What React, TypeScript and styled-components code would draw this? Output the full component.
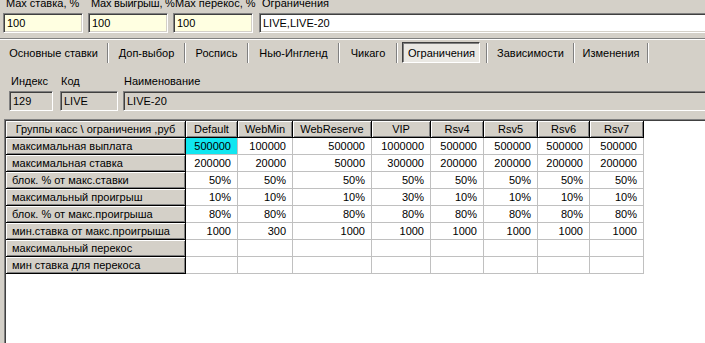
import React from 'react'
import styled, { createGlobalStyle, css } from 'styled-components'

const GlobalStyle = createGlobalStyle`
  html, body {
    margin: 0;
    padding: 0;
    overflow: hidden;
    background: #d4d0c8;
  }
`

const Window = styled.div`
  width: 705px;
  height: 343px;
  overflow: hidden;
  display: flex;
  flex-direction: column;
  background: #d4d0c8;
  color: #000;
  font-family: 'Liberation Sans', Arial, sans-serif;
  font-size: 11px;
`

const FieldRow = styled.div<{ $top: number; $left: number }>`
  display: flex;
  margin-top: ${p => p.$top}px;
  padding-left: ${p => p.$left}px;
`

const FieldGroup = styled.div<{ $w?: number; $ml?: number }>`
  display: flex;
  flex-direction: column;
  gap: 3px;
  margin-left: ${p => p.$ml ?? 0}px;
  ${p =>
    p.$w
      ? css`
          width: ${p.$w}px;
          flex: none;
        `
      : css`
          flex: 1;
          margin-right: -20px;
        `}
`

const Label = styled.div<{ $indent: number; $tight?: boolean }>`
  height: 13px;
  line-height: 13px;
  padding-left: ${p => p.$indent}px;
  white-space: nowrap;
  overflow: visible;
  letter-spacing: ${p => (p.$tight ? '-0.2px' : 'normal')};
`

const Edit = styled.div<{ $bg: string }>`
  box-sizing: border-box;
  height: 20px;
  padding: 0 3px;
  line-height: 18px;
  white-space: nowrap;
  overflow: hidden;
  background: ${p => p.$bg};
  border: 1px solid;
  border-color: #808080 #fff #fff #808080;
  box-shadow: inset 1px 1px 0 #404040, inset -1px -1px 0 #d4d0c8;
`

const ToolBar = styled.div`
  display: flex;
  align-items: flex-start;
  margin-top: 5px;
  padding-top: 3px;
  height: 21px;
  border-top: 1px solid #808080;
  box-shadow: inset 0 1px 0 #fff;
`

const Tab = styled.div<{ $w: number; $active?: boolean }>`
  box-sizing: border-box;
  width: ${p => p.$w}px;
  height: 21px;
  display: flex;
  align-items: center;
  justify-content: center;
  white-space: nowrap;
  ${p =>
    p.$active &&
    css`
      margin: 0 6px 0 4px;
      padding: 1px 0 0 1px;
      background: #eae8e3;
      border: 1px solid;
      border-color: #404040 #fff #fff #404040;
      box-shadow: inset 1px 1px 0 #808080;
    `}
`

const Separator = styled.div`
  box-sizing: border-box;
  width: 2px;
  height: 20px;
  margin-top: 1px;
  border-left: 1px solid #808080;
  border-right: 1px solid #fff;
`

const GridFrame = styled.div`
  flex: 1;
  margin: 8px -20px -20px 4px;
  padding: 1px 0 0 1px;
  background: #fff;
  border-top: 1px solid #808080;
  border-left: 1px solid #808080;
  box-shadow: inset 1px 1px 0 #404040;
`

const Grid = styled.div<{ $cols: number[] }>`
  display: grid;
  grid-template-columns: ${p => p.$cols.map(c => `${c}px`).join(' ')};
  grid-auto-rows: 17px;
`

const FixedCell = styled.div<{ $align: 'left' | 'center' }>`
  box-sizing: border-box;
  padding-left: ${p => (p.$align === 'left' ? 6 : 0)}px;
  text-align: ${p => p.$align};
  line-height: 16px;
  white-space: nowrap;
  overflow: hidden;
  background: #d4d0c8;
  border-right: 1px solid #000;
  border-bottom: 1px solid #000;
  box-shadow: inset 1px 1px 0 #fff, inset -1px -1px 0 #808080;
`

const DataCell = styled.div<{ $selected?: boolean }>`
  box-sizing: border-box;
  padding-right: 6px;
  text-align: right;
  line-height: 16px;
  white-space: nowrap;
  overflow: hidden;
  background: ${p => (p.$selected ? '#10e6f0' : '#fff')};
  border-right: 1px solid #c0c0c0;
  border-bottom: 1px solid #c0c0c0;
`

const limits = [
  { label: 'Max ставка, %', value: '100', w: 80, indent: 3, ml: 0, bg: '#ffffe1' },
  { label: 'Max выигрыш, %', value: '100', w: 80, indent: 3, ml: 5, bg: '#ffffe1', tight: true },
  { label: 'Max перекос, %', value: '100', w: 80, indent: 2, ml: 5, bg: '#ffffe1' },
  { label: 'Ограничения', value: 'LIVE,LIVE-20', indent: 3, ml: 6, bg: '#fff' },
]

const tabs = [
  { title: 'Основные ставки', w: 107 },
  { title: 'Доп-выбор', w: 75 },
  { title: 'Роспись', w: 61 },
  { title: 'Нью-Ингленд', w: 89 },
  { title: 'Чикаго', w: 56 },
  { title: 'Ограничения', w: 78, active: true },
  { title: 'Зависимости', w: 85 },
  { title: 'Изменения', w: 72 },
]

const info = [
  { label: 'Индекс', value: '129', w: 44, indent: 2, ml: 0 },
  { label: 'Код', value: 'LIVE', w: 58, indent: 1, ml: 7 },
  { label: 'Наименование', value: 'LIVE-20', indent: 1, ml: 5 },
]

const columns = ['Default', 'WebMin', 'WebReserve', 'VIP', 'Rsv4', 'Rsv5', 'Rsv6', 'Rsv7']
const colWidths = [180, 52, 55, 79, 59, 53, 54, 52, 54]

const rows: [string, string[]][] = [
  ['максимальная выплата', ['500000', '100000', '500000', '1000000', '500000', '500000', '500000', '500000']],
  ['максимальная ставка', ['200000', '20000', '50000', '300000', '200000', '200000', '200000', '200000']],
  ['блок. % от макс.ставки', ['50%', '50%', '50%', '50%', '50%', '50%', '50%', '50%']],
  ['максимальный проигрыш', ['10%', '10%', '10%', '30%', '10%', '10%', '10%', '10%']],
  ['блок. % от макс.проигрыша', ['80%', '80%', '80%', '80%', '80%', '80%', '80%', '80%']],
  ['мин.ставка от макс.проигрыша', ['1000', '300', '1000', '1000', '1000', '1000', '1000', '1000']],
  ['максимальный перекос', ['', '', '', '', '', '', '', '']],
  ['мин ставка для перекоса', ['', '', '', '', '', '', '', '']],
]

export default function App() {
  return (
    <>
      <GlobalStyle />
      <Window>
        <FieldRow $top={-3} $left={3}>
          {limits.map(f => (
            <FieldGroup key={f.label} $w={f.w} $ml={f.ml}>
              <Label $indent={f.indent} $tight={f.tight}>
                {f.label}
              </Label>
              <Edit $bg={f.bg}>{f.value}</Edit>
            </FieldGroup>
          ))}
        </FieldRow>

        <ToolBar>
          {tabs.map(t => (
            <React.Fragment key={t.title}>
              <Tab $w={t.w} $active={t.active}>
                {t.title}
              </Tab>
              <Separator />
            </React.Fragment>
          ))}
        </ToolBar>

        <FieldRow $top={12} $left={9}>
          {info.map(f => (
            <FieldGroup key={f.label} $w={f.w} $ml={f.ml}>
              <Label $indent={f.indent}>{f.label}</Label>
              <Edit $bg="#d4d0c8">{f.value}</Edit>
            </FieldGroup>
          ))}
        </FieldRow>

        <GridFrame>
          <Grid $cols={colWidths}>
            <FixedCell $align="center">{'Группы касс \\ ограничения ,руб'}</FixedCell>
            {columns.map(c => (
              <FixedCell key={c} $align="center">
                {c}
              </FixedCell>
            ))}
            {rows.map(([name, values], r) => (
              <React.Fragment key={name}>
                <FixedCell $align="left">{name}</FixedCell>
                {values.map((v, c) => (
                  <DataCell key={c} $selected={r === 0 && c === 0}>
                    {v}
                  </DataCell>
                ))}
              </React.Fragment>
            ))}
          </Grid>
        </GridFrame>
      </Window>
    </>
  )
}
